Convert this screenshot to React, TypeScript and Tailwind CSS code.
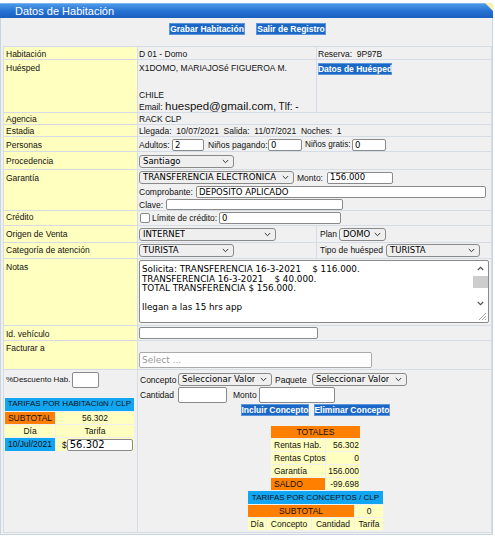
import React from 'react';

type Kid = { children?: React.ReactNode };

function Chevron() {
  return (
    <svg width="7" height="5" viewBox="0 0 7 5" className="shrink-0">
      <path d="M0.8 1L3.5 3.7L6.2 1" fill="none" stroke="#333" strokeWidth="1" />
    </svg>
  );
}

function Sel({ w, text, h = 'h-[13px]' }: { w: string; text: string; h?: string }) {
  return (
    <div
      className={`${w} ${h} shrink-0 flex items-center justify-between border border-[#8a8a8a] rounded-[3px] bg-[#efefef] pl-[3px] pr-[4px] font-['DejaVu_Sans',Verdana,sans-serif] text-[8.5px] leading-none text-black`}
    >
      <span className="truncate">{text}</span>
      <Chevron />
    </div>
  );
}

function Inp({ w, h = 'h-[12px]', value = '', big = false }: { w: string; h?: string; value?: string; big?: boolean }) {
  return (
    <div
      className={`${w} ${h} shrink-0 flex items-center border border-[#8a8a8a] rounded-[2px] bg-white pl-[2px] font-['DejaVu_Sans',Verdana,sans-serif] ${big ? 'text-[10px]' : 'text-[8.5px]'} leading-none text-black whitespace-nowrap overflow-hidden`}
    >
      {value}
    </div>
  );
}

function Btn({ w, children }: { w: string } & Kid) {
  return (
    <div
      className={`${w} h-[12px] shrink-0 flex items-center justify-center bg-[#1c68c6] border border-[#5b95dc] text-white font-bold text-[8.5px] leading-none whitespace-nowrap`}
    >
      {children}
    </div>
  );
}

function L({ children, pt = 'pt-[2px]' }: { pt?: string } & Kid) {
  return <div className={`bg-[#ffffc0] pl-[2px] ${pt} whitespace-nowrap`}>{children}</div>;
}

// plain grey value cell
function V({ children, className = '' }: { className?: string } & Kid) {
  return <div className={`bg-[#f0f0f0] ${className}`}>{children}</div>;
}

const notes = `Solicita: TRANSFERENCIA 16-3-2021    $ 116.000.
TRANSFERENCIA 16-3-2021    $ 40.000.
TOTAL TRANSFERENCIA $ 156.000.

llegan a las 15 hrs app`;

export default function App() {
  return (
    <div className="w-[495px] h-[537px] bg-white pt-[3px] font-['Liberation_Sans',Arial,sans-serif] text-[8.5px] leading-[10px] text-[#111]">
      <div className="relative w-[493px]">
        {/* title bar */}
        <div className="h-[15px] bg-linear-to-b from-[#4c99e8] via-[#2572d4] to-[#1a60bf] border-t border-[#7ab3ee] flex items-center pl-[15px] text-white text-[11px] leading-none">
          Datos de Habitación
        </div>
        <svg className="absolute right-0 top-0" width="8" height="8" viewBox="0 0 8 8">
          <polygon points="0,0 8,0 8,8" fill="#f4f1b0" />
        </svg>

        <div className="border-x border-b border-[#c8d4e2] bg-[#f0f0f0] pl-[2px] pb-[1px]">
          {/* buttons */}
          <div className="h-[28px] flex justify-center gap-[11px] pt-[5px]">
            <Btn w="w-[76px]">Grabar Habitación</Btn>
            <Btn w="w-[70px]">Salir de Registro</Btn>
          </div>

          {/* form grid */}
          <div className="grid w-[489px] grid-cols-[133px_178px_174px] grid-rows-[12px_52px_11px_11px_14px_17px_40px_14px_16px_15px_66px_14px_28px_162px] gap-px bg-[#d5dce6] p-px">
            {/* Habitación */}
            <L pt="pt-[2px]">Habitación</L>
            <V className="pl-[1px] pt-[2px]">D 01 - Domo</V>
            <V className="pl-[1px] pt-[2px] whitespace-pre">Reserva:  9P97B</V>

            {/* Huésped */}
            <L pt="pt-[3px]">Huésped</L>
            <V className="pl-[1px] pt-[3px] whitespace-nowrap">
              <div>X1DOMO, MARIAJOSé FIGUEROA M.</div>
              <div className="mt-[17px]">CHILE</div>
              <div className="leading-[12px]">
                Email: <span className="text-[11.5px]">huesped@gmail.com</span>
                <span className="text-[10px]">, Tlf: -</span>
              </div>
            </V>
            <V className="pl-[1px] pt-[3px]">
              <Btn w="w-[74px]">Datos de Huésped</Btn>
            </V>

            {/* Agencia */}
            <L pt="pt-[1px]">Agencia</L>
            <V className="col-span-2 pl-[1px] pt-[1px]">RACK CLP</V>

            {/* Estadia */}
            <L pt="pt-[1px]">Estadia</L>
            <V className="col-span-2 pl-[1px] pt-[1px] whitespace-pre">
              {'Llegada:  10/07/2021  Salida:  11/07/2021  Noches:  1'}
            </V>

            {/* Personas */}
            <L pt="pt-[3px]">Personas</L>
            <V className="col-span-2 pl-[1px] pt-[2px]">
              <div className="flex items-center h-[12px] whitespace-nowrap">
                <span className="w-[33px]">Adultos:</span>
                <Inp w="w-[32px]" value="2" />
                <span className="ml-[4px] w-[60px]">Niños pagando:</span>
                <Inp w="w-[34px]" value="0" />
                <span className="ml-[3px] w-[47px] text-[8.2px]">Niños gratis:</span>
                <Inp w="w-[34px]" value="0" />
              </div>
            </V>

            {/* Procedencia */}
            <L pt="pt-[4px]">Procedencia</L>
            <V className="col-span-2 pl-[1px] pt-[3px]">
              <Sel w="w-[95px]" text="Santiago" />
            </V>

            {/* Garantía */}
            <L pt="pt-[3px]">Garantía</L>
            <V className="col-span-2 pl-[1px] pt-[1px] whitespace-nowrap">
              <div className="flex items-center h-[13px]">
                <Sel w="w-[155px]" text="TRANSFERENCIA ELECTRONICA" />
                <span className="ml-[3px] w-[30px]">Monto:</span>
                <Inp w="w-[66px]" value="156.000" />
              </div>
              <div className="flex items-center h-[12px] mt-[2px]">
                <span className="w-[57px]">Comprobante:</span>
                <Inp w="w-[290px]" value="DEPOSITO APLICADO" />
              </div>
              <div className="flex items-center h-[11px] mt-[1px]">
                <span className="w-[27px]">Clave:</span>
                <Inp w="w-[177px]" h="h-[11px]" />
              </div>
            </V>

            {/* Crédito */}
            <L pt="pt-[1px]">Crédito</L>
            <V className="col-span-2 pl-[1px] flex items-center whitespace-nowrap">
              <div className="ml-[1px] w-[10px] h-[10px] border border-[#8a8a8a] rounded-[2px] bg-white" />
              <span className="ml-[2px] w-[67px]">Límite de crédito:</span>
              <Inp w="w-[122px]" value="0" />
            </V>

            {/* Origen de Venta */}
            <L pt="pt-[3px]">Origen de Venta</L>
            <V className="pl-[1px] pt-[2px]">
              <Sel w="w-[137px]" text="INTERNET" />
            </V>
            <V className="pl-[3px] pt-[2px] flex items-start">
              <span className="w-[19px] leading-[13px]">Plan</span>
              <Sel w="w-[47px]" text="DOMO" />
            </V>

            {/* Categoría */}
            <L pt="pt-[2px]">Categoría de atención</L>
            <V className="pl-[1px] pt-[1px]">
              <Sel w="w-[95px]" text="TURISTA" />
            </V>
            <V className="pl-[3px] pt-[1px] flex items-start whitespace-nowrap">
              <span className="w-[66px] leading-[13px]">Tipo de huésped</span>
              <Sel w="w-[94px]" text="TURISTA" />
            </V>

            {/* Notas */}
            <L pt="pt-[3px]">Notas</L>
            <V className="col-span-2 pl-[1px] pt-[1px]">
              <div className="w-[350px] h-[63px] border border-[#8a8a8a] rounded-[2px] bg-white flex">
                <div className="flex-1 pl-[2px] pt-[4px] font-['DejaVu_Sans',Verdana,sans-serif] text-[8.8px] leading-[9.5px] whitespace-pre text-black">
                  {notes}
                </div>
                <div className="w-[15px] flex flex-col">
                  <div className="h-[15px] flex items-center justify-center">
                    <svg width="7" height="5" viewBox="0 0 7 5">
                      <path d="M0.8 4L3.5 1.3L6.2 4" fill="none" stroke="#505050" strokeWidth="1.1" />
                    </svg>
                  </div>
                  <div className="h-[12px] bg-[#cdcdcd]" />
                  <div className="h-[10px]" />
                  <div className="h-[10px] flex items-center justify-center">
                    <svg width="7" height="5" viewBox="0 0 7 5">
                      <path d="M0.8 1L3.5 3.7L6.2 1" fill="none" stroke="#505050" strokeWidth="1.1" />
                    </svg>
                  </div>
                  <div className="h-[14px] flex items-end justify-end pr-[1px] pb-[1px]">
                    <svg width="9" height="9" viewBox="0 0 9 9">
                      <path d="M8 1L1 8M8 4L4 8M8 7L7 8" stroke="#8a8a8a" strokeWidth="0.8" />
                    </svg>
                  </div>
                </div>
              </div>
            </V>

            {/* Id vehículo */}
            <L pt="pt-[3px]">Id. vehículo</L>
            <V className="col-span-2 pl-[1px] pt-[1px]">
              <Inp w="w-[179px]" />
            </V>

            {/* Facturar a */}
            <L pt="pt-[2px]">Facturar a</L>
            <V className="col-span-2 pl-[1px] pt-[11px]">
              <div className="w-[233px] h-[16px] flex items-center border border-[#aaa] rounded-[2px] bg-white pl-[2px] font-['DejaVu_Sans',Verdana,sans-serif] text-[9px] leading-none text-[#999]">
                Select ...
              </div>
            </V>

            {/* bottom left */}
            <V className="pt-[2px]">
              <div className="flex items-center h-[16px] pl-[2px] whitespace-nowrap">
                <span className="w-[66px] text-[8px]">%Descuento Hab.</span>
                <Inp w="w-[27px]" h="h-[16px]" />
              </div>
              <div className="ml-[1px] mt-[10px] grid w-[129px] grid-cols-[50px_78px] grid-rows-[13px_12px_12px_13px] gap-px text-center leading-[12px] whitespace-nowrap">
                <div className="col-span-2 bg-[#12a6f2] text-[8px]">TARIFAS POR HABITACIóN / CLP</div>
                <div className="bg-[#ff8000]">SUBTOTAL</div>
                <div className="bg-[#ffffc0]">56.302</div>
                <div className="bg-[#ffffc0]">Día</div>
                <div className="bg-[#ffffc0]">Tarifa</div>
                <div className="bg-[#12a6f2] leading-[13px]">10/Jul/2021</div>
                <div className="bg-[#ffffc0] flex items-center pl-[6px]">
                  <span>$</span>
                  <Inp w="w-[66px]" h="h-[12px]" value="56.302" big />
                </div>
              </div>
            </V>

            {/* bottom right */}
            <V className="col-span-2 pl-[2px] pt-[3px] whitespace-nowrap">
              <div className="flex items-center h-[13px]">
                <span className="w-[38px]">Concepto</span>
                <Sel w="w-[94px]" text="Seleccionar Valor" />
                <span className="ml-[3px] w-[37px]">Paquete</span>
                <Sel w="w-[95px]" text="Seleccionar Valor" />
              </div>
              <div className="flex items-center h-[16px] mt-[1px]">
                <span className="w-[38px]">Cantidad</span>
                <Inp w="w-[49px]" h="h-[16px]" />
                <span className="ml-[6px] w-[26px]">Monto</span>
                <Inp w="w-[76px]" h="h-[16px]" />
              </div>
              <div className="flex justify-center gap-[5px] mt-[1px]">
                <Btn w="w-[68px]">Incluir Concepto</Btn>
                <Btn w="w-[76px]">Eliminar Concepto</Btn>
              </div>

              <div className="mx-auto mt-[10px] grid w-[89px] grid-cols-[54px_34px] auto-rows-[12px] gap-px leading-[12px]">
                <div className="col-span-2 bg-[#ff8000] text-center">TOTALES</div>
                <div className="bg-[#ffffc0] pl-[3px]">Rentas Hab.</div>
                <div className="bg-[#ffffc0] text-right pr-[1px]">56.302</div>
                <div className="bg-[#ffffc0] pl-[3px]">Rentas Cptos.</div>
                <div className="bg-[#ffffc0] text-right pr-[1px]">0</div>
                <div className="bg-[#ffffc0] pl-[3px]">Garantía</div>
                <div className="bg-[#ffffc0] text-right pr-[1px]">156.000</div>
                <div className="bg-[#ff8000] pl-[3px]">SALDO</div>
                <div className="bg-[#ffffc0] text-right pr-[1px]">-99.698</div>
              </div>

              <div className="mx-auto mt-[1px] grid w-[135px] grid-cols-[18px_44px_42px_28px] grid-rows-[13px_12px_12px] gap-px text-center leading-[12px]">
                <div className="col-span-4 bg-[#12a6f2] text-[8px] leading-[13px]">TARIFAS POR CONCEPTOS / CLP</div>
                <div className="col-span-3 bg-[#ff8000]">SUBTOTAL</div>
                <div className="bg-[#ffffc0]">0</div>
                <div className="bg-[#ffffc0]">Día</div>
                <div className="bg-[#ffffc0]">Concepto</div>
                <div className="bg-[#ffffc0]">Cantidad</div>
                <div className="bg-[#ffffc0]">Tarifa</div>
              </div>
            </V>
          </div>
        </div>
      </div>
    </div>
  );
}
